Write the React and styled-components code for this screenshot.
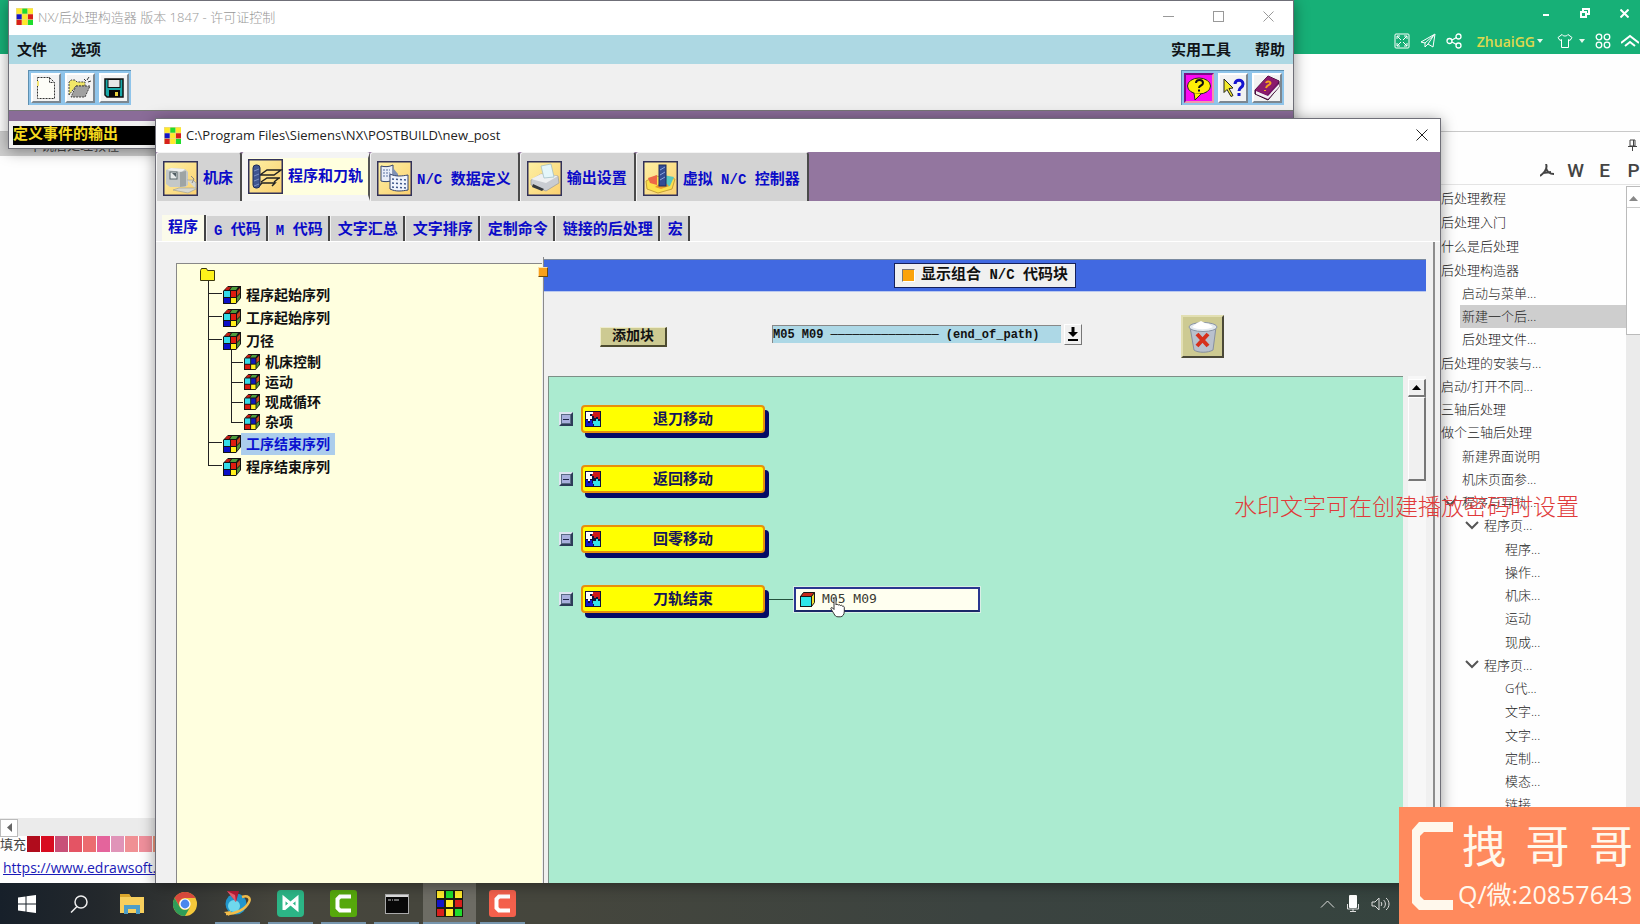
import React from 'react';
import styled, { createGlobalStyle, css } from 'styled-components';

const UI = '"Open Sans", "Noto Sans CJK SC", sans-serif';
const BITMAP = '"Liberation Mono", "Noto Sans CJK SC", monospace';

const GlobalStyle = createGlobalStyle`
  *, *::before, *::after { box-sizing: border-box; }
  html, body { margin: 0; height: 100%; overflow: hidden; }
  body { font-family: ${UI}; font-size: 13px; color: #444; background: #fff; }
  #root { height: 100%; }
  button, input, select { font: inherit; color: inherit; margin: 0; border-radius: 0; }
  button { padding: 0; border: 0; background: none; display: inline-flex; align-items: center; justify-content: center; }
  ul { list-style: none; margin: 0; padding: 0; }
  svg { display: block; flex: none; }
`;

const Desktop = styled.div`
  position: relative;
  height: 100vh;
  display: flex;
  flex-direction: column;
  overflow: hidden;
`;

/* ---------- drawing app behind ---------- */

const DrawApp = styled.div`
  flex: 1;
  min-height: 0;
  display: flex;
  flex-direction: column;
  background: #fefefe;
`;

const DrawHeader = styled.header`
  height: 54px;
  flex: none;
  background: #17b077;
  color: #fff;
  display: flex;
  flex-direction: column;
  align-items: flex-end;
`;

const WindowControls = styled.div`
  height: 26px;
  display: flex;
  align-items: center;
  gap: 30px;
  padding-right: 11px;
`;

const HeaderTools = styled.div`
  height: 28px;
  display: flex;
  align-items: center;
  gap: 10px;
  padding: 2px 1px 0 0;
`;

const ToolLink = styled.button`
  gap: 6px;
`;

const Account = styled.button`
  color: #dfd84e;
  font-weight: 600;
  font-size: 14px;
  gap: 2px;
  margin: 0 4px 0 5px;
`;

const Ribbon = styled.div`
  height: 78px;
  flex: none;
  border-bottom: 1px solid #c9c9c9;
`;

const DrawBody = styled.div`
  flex: 1;
  min-height: 0;
  display: flex;
  justify-content: space-between;
`;

const DrawLeft = styled.div`
  width: 170px;
  display: flex;
  flex-direction: column;
`;

const DocTab = styled.div`
  height: 24px;
  background: #cfcfcf;
  padding: 4px 0 0 28px;
  line-height: 18px;
  white-space: nowrap;
`;

const DrawCanvas = styled.div`
  flex: 1;
`;

const HScroll = styled.div`
  height: 18px;
  background: #ebebeb;
`;

const HScrollButton = styled.button`
  width: 18px;
  height: 18px;
  border: 1px solid #bbb;
  background: #fff;
`;

const Swatches = styled.div`
  height: 16px;
  display: flex;
  gap: 1px;
  overflow: hidden;
  white-space: nowrap;
  line-height: 16px;
`;

const Swatch = styled.span`
  width: 13px;
  flex: none;
  background: ${(p) => p.$color};
`;

const LinkBar = styled.div`
  height: 31px;
  padding-left: 3px;
  line-height: 31px;
  font-size: 14px;
  white-space: nowrap;
  overflow: hidden;
  a { color: #1a1ab8; }
`;

const Sidebar = styled.aside`
  width: 201px;
  display: flex;
  flex-direction: column;
  color: #444;
`;

const PinRow = styled.div`
  height: 25px;
  display: flex;
  align-items: center;
  justify-content: flex-end;
  padding-right: 3px;
`;

const ExportRow = styled.div`
  height: 28px;
  border-bottom: 1px solid #e4e4e4;
  display: grid;
  grid-template-columns: repeat(4, 29px);
  justify-content: end;
  margin-right: -8px;
  font: 500 19px/26px Roboto, sans-serif;
`;

const OutlineArea = styled.div`
  flex: 1;
  min-height: 0;
  display: flex;
  padding-top: 1px;
`;

const Outline = styled.div`
  flex: 1;
  display: flex;
  flex-direction: column;
  padding-bottom: 67px;
`;

const OutlineHead = styled.ul`
  display: grid;
  grid-auto-rows: 24px;
`;

const OutlineList = styled.ul`
  flex: 1;
  display: grid;
  grid-auto-rows: 1fr;
`;

const OutlineItem = styled.li`
  display: flex;
  align-items: center;
  gap: 5px;
  white-space: nowrap;
  line-height: 20px;
  font-weight: 300;
  color: #222;
  margin-left: ${(p) => [0, 21, 64, 2, 24][p.$level]}px;
  padding-left: 2px;
  background: ${(p) => (p.$active ? '#cecece' : 'transparent')};
`;

const VScroll = styled.div`
  width: 14px;
  background: #ebebeb;
`;

const VScrollThumb = styled.div`
  height: 149px;
  background: #fff;
  border: 1px solid #bbb;
  border-right: 0;
`;

const VScrollButton = styled.button`
  width: 100%;
  height: 17px;
  border-bottom: 1px solid #ccc;
`;

/* ---------- post builder windows ---------- */

const WindowFrame = styled.section`
  position: absolute;
  display: flex;
  flex-direction: column;
  background: #f0f0f0;
  border: 1px solid #6f6f78;
  box-shadow: 0 2px 14px rgba(0, 0, 0, 0.4);
`;

const LauncherWindow = styled(WindowFrame)`
  top: 0;
  left: 8px;
  right: 346px;
`;

const EditorWindow = styled(WindowFrame)`
  top: 118px;
  left: 155px;
  right: 199px;
  bottom: 41px;
  border-bottom: 0;
`;

const TitleBar = styled.header`
  height: ${(p) => (p.$muted ? 34 : 33)}px;
  flex: none;
  background: #fff;
  display: flex;
  align-items: center;
  gap: 5px;
  padding: ${(p) => (p.$muted ? '0 19px 3px 7px' : '0 12px 1px 8px')};
  color: ${(p) => (p.$muted ? '#999' : '#222')};
  font-weight: ${(p) => (p.$muted ? 300 : 400)};
`;

const TitleText = styled.h1`
  flex: 1;
  margin: 0;
  font: inherit;
  white-space: nowrap;
`;

const TitleButtons = styled.div`
  display: flex;
  align-items: center;
  gap: 39px;
`;

const MenuBar = styled.nav`
  height: 29px;
  flex: none;
  background: #add8e3;
  display: flex;
  align-items: center;
  gap: 24px;
  padding: 4px 8px 0;
  font: bold 15px/20px ${BITMAP};
  color: #101418;
`;

const MenuItem = styled.button`
  margin-left: ${(p) => (p.$push ? 'auto' : 0)};
`;

const ToolBar = styled.div`
  height: 46px;
  flex: none;
  display: flex;
  align-items: center;
  justify-content: space-between;
  padding: 0 9px 0 19px;
`;

const ToolGroup = styled.div`
  display: flex;
  gap: 4px;
  padding: 2px;
  background: #8fc4ea;
  border-top: 1px solid #5d8fb0;
  border-left: 1px solid #5d8fb0;
`;

const ToolButton = styled.button`
  width: 30px;
  height: 30px;
  background: ${(p) => (p.$pressed ? '#fb0af4' : '#f2f2f2')};
  border: 2px solid;
  border-color: ${(p) => (p.$pressed ? '#7a0c86 #ee99aa #ee99aa #7a0c86' : '#fff #7c8790 #7c8790 #fff')};
`;

const PurpleStrip = styled.div`
  height: 11px;
  background: #8a6c98;
  border-top: 1px solid #777;
`;

const StatusBar = styled.div`
  padding: 5px 4px 3px;
`;

const StatusText = styled.output`
  display: block;
  background: #000;
  color: #f5da1e;
  font: bold 15px/18px ${BITMAP};
  padding-top: 1px;
`;

const Latin = styled.span`
  font-size: 14px;
`;

const MainTabs = styled.div`
  height: 49px;
  flex: none;
  display: flex;
  background: #93769f;
`;

const MainTab = styled.button`
  height: 49px;
  gap: 5px;
  padding: 3px 7px 0 6px;
  background: #d3d3d3;
  border-right: 2px solid #4a4a4a;
  border-top: 1px solid #f4f4f4;
  border-left: 1px solid #f4f4f4;
  border-radius: 3px 3px 0 0;
  font: bold 15px/20px ${BITMAP};
  color: #0b0bc8;
  white-space: pre;
  > span { padding-top: 3px; }
  ${(p) => p.$active && css`
    background: #ffffdf;
    border: 6px solid #f4f4f4;
    border-right: 2px solid #555;
    padding: 0 5px 0 0;
  `}
`;

const SubTabs = styled.div`
  height: 41px;
  flex: none;
  display: flex;
  align-items: flex-end;
  gap: 1px;
  padding-left: 6px;
  border-bottom: 1px solid #fff;
`;

const SubTab = styled.button`
  height: 25px;
  padding: 4px 5px 0 7px;
  background: #d3d3d3;
  border-right: 2px solid #444;
  font: bold 15px/20px ${BITMAP};
  color: #0b0bc8;
  white-space: pre;
  ${(p) => p.$active && css`
    height: 26px;
    background: #fbfbea;
    padding: 2px 6px 0;
  `}
`;

const Workspace = styled.div`
  flex: 1;
  min-height: 0;
  display: flex;
  margin-right: 5px;
  border-right: 2px solid #8c8c8c;
  padding: 17px 7px 0 20px;
`;

const TreePane = styled.div`
  flex: none;
  width: 366px;
  margin-top: 4px;
  background: #ffffdf;
  border-top: 1px solid #888;
  border-left: 1px solid #888;
  padding: 4px 0 0 23px;
  font: bold 14px/20px ${BITMAP};
  color: #111;
`;

const Tree = styled.ul`
  margin-left: 8px;
  padding-top: 2px;
`;

const TreeNode = styled.li`
  position: relative;
  padding-left: ${(p) => (p.$sub ? 13 : 15)}px;
  &::before {
    content: '';
    position: absolute;
    top: -2px;
    left: 0;
    width: ${(p) => (p.$sub ? 12 : 14)}px;
    height: 13px;
    border-left: 1px solid #222;
    border-bottom: 1px solid #222;
  }
  &:not(:last-child)::after {
    content: '';
    position: absolute;
    top: 0;
    bottom: 0;
    left: 0;
    border-left: 1px solid #222;
  }
  ul { margin-left: 8px; }
`;

const TreeRow = styled.div`
  display: flex;
  align-items: center;
  height: ${(p) => (p.$sub ? 20 : 23)}px;
`;

const TreeLabel = styled.span`
  height: 22px;
  line-height: 20px;
  padding: 2px 5px 0 5px;
  background: ${(p) => (p.$selected ? '#abcdec' : 'transparent')};
  color: ${(p) => (p.$selected ? '#0a12d0' : 'inherit')};
`;

const Splitter = styled.div`
  position: relative;
  width: 2px;
  margin-top: -2px;
  border-right: 1px solid #8a8a8a;
`;

const SplitHandle = styled.button`
  position: absolute;
  top: 10px;
  left: -4px;
  width: 10px;
  height: 10px;
  background: #f9a11b;
  border: 1px solid #fff;
  border-color: #fde0a8 #6b4a10 #6b4a10 #fde0a8;
`;

const Editor = styled.div`
  flex: 1;
  min-width: 0;
  display: flex;
  flex-direction: column;
`;

const OptionBar = styled.div`
  height: 33px;
  flex: none;
  background: #4169e1;
  border-top: 1px solid #7a8aa0;
  border-bottom: 1px solid #b9c8f0;
  display: flex;
  align-items: center;
  justify-content: center;
`;

const CheckLabel = styled.label`
  display: flex;
  align-items: center;
  gap: 6px;
  height: 25px;
  padding: 0 7px;
  border: 1px solid #15205a;
  background: #f0f0f0;
  font: bold 15px/20px ${BITMAP};
  color: #111;
  white-space: pre;
`;

const CheckBox = styled.input`
  appearance: none;
  width: 13px;
  height: 13px;
  background: #fba30a;
  border: 1px solid;
  border-color: #777 #fff #fff #777;
`;

const ActionRow = styled.div`
  height: 84px;
  flex: none;
  display: grid;
  grid-template-columns: 56fr 67px 105fr 310px 99fr 43px 202fr;
  align-items: center;
  padding-top: 5px;
`;

const AddButton = styled.button`
  grid-column: 2;
  height: 20px;
  background: #cdca92;
  border: 1px solid;
  border-width: 1px 2px 2px 1px;
  border-color: #eeeccb #4d4b30 #4d4b30 #eeeccb;
  font: bold 14px/16px ${BITMAP};
  color: #111;
`;

const BlockPicker = styled.div`
  grid-column: 4;
  display: flex;
  align-items: center;
  gap: 3px;
  margin-top: -5px;
`;

const BlockSelect = styled.select`
  appearance: none;
  flex: 1;
  height: 18px;
  padding: 0;
  border: 0;
  border-top: 1px solid #888;
  border-left: 1px solid #888;
  background: #add8e6;
  font: bold 12px/16px ${BITMAP};
  color: #111;
`;

const PickerButton = styled.button`
  width: 18px;
  height: 21px;
  border: 1px solid;
  border-color: #fff #777 #777 #fff;
`;

const TrashButton = styled.button`
  grid-column: 6;
  width: 43px;
  height: 43px;
  background: #cdca92;
  border: 2px solid;
  border-color: #e2dfb2 #4a4838 #4a4838 #e2dfb2;
`;

const CanvasRow = styled.div`
  flex: 1;
  min-height: 0;
  display: flex;
  gap: 5px;
  padding-left: 4px;
`;

const BlockCanvas = styled.div`
  flex: 1;
  background: #abebd0;
  border-top: 1px solid #7d8f86;
  border-left: 1px solid #7d8f86;
  padding: 28px 0 0 10px;
  display: flex;
  flex-direction: column;
  gap: 32px;
`;

const BlockRow = styled.div`
  display: flex;
  align-items: center;
  height: 28px;
`;

const Toggle = styled.button`
  width: 14px;
  height: 14px;
  background: #a9b0dd;
  border: 2px solid;
  border-color: #dfe5f2 #2d3c58 #2d3c58 #dfe5f2;
  outline: 1px solid #5a6a84;
  outline-offset: -3px;
  color: #20264a;
`;

const EventBlock = styled.button`
  width: 184px;
  height: 28px;
  margin: 0 4px 0 8px;
  padding: 0 2px;
  background: #ff0;
  border: 2px solid #e8900c;
  border-radius: 4px;
  box-shadow: 4px 5px 0 #060a66;
  font: bold 15px/20px ${BITMAP};
  color: #15155c;
  span { flex: 1; padding: 3px 0 0 4px; }
`;

const Connector = styled.span`
  width: 25px;
  height: 1px;
  background: #23503c;
`;

const CodeNode = styled.button`
  position: relative;
  width: 186px;
  height: 25px;
  justify-content: flex-start;
  gap: 7px;
  padding-left: 4px;
  background: #fffff0;
  border: 2px solid #2a3790;
  border-bottom-color: #1b2868;
  outline: 1px solid #d9efe6;
  font: 13px/18px "DejaVu Sans Mono", monospace;
  color: #3a3a32;
`;

const Pointer = styled.span`
  position: absolute;
  left: 34px;
  top: 8px;
`;

const CanvasScroll = styled.div`
  width: 18px;
  background: #f7f7f7;
`;

const CanvasScrollPart = styled.button`
  width: 18px;
  height: ${(p) => p.$size}px;
  background: #f0f0f0;
  border: 1px solid;
  border-width: 1px 2px 2px 1px;
  border-color: #fff #777 #777 #fff;
`;

/* ---------- taskbar and overlays ---------- */

const Taskbar = styled.footer`
  height: 41px;
  flex: none;
  display: flex;
  justify-content: space-between;
  background: linear-gradient(90deg, #17202a 0, #23282c 100px, #47463d 280px, #45463d 560px, #3b4340 60%, #33443e 100%);
`;

const TaskList = styled.div`
  display: flex;
`;

const TaskButton = styled.button`
  width: 45px;
  height: 41px;
  margin: 0 4px;
  border-bottom: 2px solid ${(p) => (p.$open ? '#7796ae' : 'transparent')};
  padding-top: 2px;
  &:first-child { margin-right: 3px; }
  ${(p) => p.$active && css`
    width: 53px;
    margin: 0;
    background: #6d6c64;
  `}
`;

const Tray = styled.div`
  display: flex;
  align-items: center;
  gap: 12px;
  margin-right: 250px;
`;

const Badge = styled.div`
  position: absolute;
  right: 0;
  bottom: 0;
  width: 241px;
  height: 117px;
  background: #ff8a5d;
  color: #fff8ec;
  display: flex;
  align-items: center;
  gap: 5px;
  padding: 0 6px 0 13px;
`;

const BadgeText = styled.div`
  flex: 1;
  display: flex;
  flex-direction: column;
`;

const BadgeName = styled.div`
  display: flex;
  justify-content: space-between;
  padding: 0 1px 0 4px;
  font-size: 44px;
  line-height: 56px;
`;

const BadgeContact = styled.div`
  font-size: 25px;
  line-height: 40px;
  white-space: nowrap;
`;

const Watermark = styled.div`
  position: absolute;
  top: 489px;
  right: 61px;
  font: 300 23px/32px "Noto Sans CJK SC", sans-serif;
  color: #e03a3a;
  white-space: nowrap;
  pointer-events: none;
`;

/* ---------- icons ---------- */

const Line = ({ w = 16, h = w, box, sw = 1, children, color = 'currentColor' }) => (
  <svg width={w} height={h} viewBox={box || `0 0 ${w} ${h}`} fill="none" stroke={color} strokeWidth={sw}>{children}</svg>
);

const MosaicIcon = ({ size = 17, dark }) => {
  const c = ['#ffe92a', '#1fdc2c', '#ffe92a', '#1414c8', '#ffe92a', '#d8201c', '#d8201c', '#ffe92a', '#1fdc2c'];
  return (
    <svg width={size} height={size} viewBox="0 0 27 27">
      <rect width="27" height="27" fill={dark ? '#1c1c10' : '#e8d890'} />
      {c.map((f, i) => <rect key={i} x={1 + (i % 3) * 9} y={1 + Math.floor(i / 3) * 9} width={dark ? 7 : 8} height={dark ? 7 : 8} fill={f} />)}
    </svg>
  );
};

const Cross = ({ size = 11, sw = 1 }) => <Line w={size} sw={sw}><path d={`M.5.5l${size - 1} ${size - 1}M${size - 0.5}.5L.5 ${size - 0.5}`} /></Line>;

const Caret = () => <svg width="6" height="4"><path d="M0 0h6L3 4z" fill="#e8f8ee" /></svg>;

const CubeIcon = ({ size = 18, sub }) => (
  <svg width={size} height={size} viewBox="0 0 18 18">
    <path d="M0 5l5-5h13v12l-5 6H0z" fill="#141414" />
    <path d="M2 4l2-3h4L6 4z" fill="#c01c14" /><path d="M7 4l2-3h6l-2 3z" fill="#4d9c3c" />
    <path d="M14 5l3-3v5l-3 3z" fill="#c8431e" /><path d="M14 11l3-3v4l-3 4z" fill="#4f8f38" />
    <rect x="1" y="5" width="6" height="6" fill="#35dbe8" /><rect x="8" y="5" width="5" height="6" fill={sub ? '#1018b8' : '#e01c10'} />
    <rect x="1" y="12" width="6" height="5" fill={sub ? '#d81c10' : '#0c10c8'} /><rect x="8" y="12" width="5" height="5" fill="#fff01c" />
  </svg>
);

const FolderIcon = () => (
  <svg width="15" height="13" viewBox="0 0 15 13"><path d="M.5 12.500v-10l1-2h5l1 2h7v10z" fill="#fdf21b" stroke="#3b3810" /></svg>
);

const EventIcon = () => (
  <svg width="16" height="16" viewBox="0 0 16 16">
    <rect width="16" height="16" fill="#101038" />
    <path d="M1 1h7v2H5v2h2v3H5v2H3V8H1z" fill="#fff" /><path d="M8 1h7v7h-2V6h-2v1H9V5H7V3h1z" fill="#d01818" />
    <path d="M1 9h2v3h2V9h2v3h1v3H1z" fill="#1018d0" /><path d="M8 10h3V8h2v2h2v5H9v-2H8z" fill="#36e2ea" />
  </svg>
);

const NodeIcon = () => (
  <svg width="15" height="15" viewBox="0 0 15 15" stroke="#181818">
    <path d="M.5 4.500l3-4h11l-3 4z" fill="#c8281c" /><path d="M11.500 4.500l3-4v10l-3 4z" fill="#f0e030" /><rect x=".5" y="4.500" width="11" height="10" fill="#2fe6ea" />
  </svg>
);

const HandIcon = () => (
  <svg width="16" height="21" viewBox="0 0 16 21">
    <path d="M4 1.500c0-1 2-1 2 0V8c.3-1 2-.8 2.200.2.500-.9 2-.6 2.200.4.600-.8 2-.3 2.100.7.700-.4 1.800.1 1.800 1v4c0 3-1.500 5.500-4 5.500H8c-2 0-3-1-4-3L1 12c-.6-1.300.8-2 1.700-1L4 12.500z" fill="#fff" stroke="#222" strokeWidth=".9" />
  </svg>
);

const NewIcon = () => (
  <svg width="20" height="24" viewBox="0 0 20 24"><path d="M1.500 1.500h12l5 5v16h-17zM13.500 1.500v5h5" fill="#fdfdf8" stroke="#333" strokeDasharray="2 1" /><path d="M1 5h2v5H1z" fill="#f4e678" /></svg>
);
const OpenIcon = () => (
  <svg width="26" height="24" viewBox="0 0 26 24"><path d="M2 19V6l2-2h4l2 2h8v4H9z" fill="#f1e768" stroke="#444" strokeDasharray="2 1" /><path d="M9 10h14l-5 11H4z" fill="#a0a0a0" stroke="#444" strokeDasharray="2 1" /><path d="M17 3l2 2M22 1l-2 3M21 6l3-1" stroke="#333" /></svg>
);
const SaveIcon = () => (
  <svg width="20" height="20" viewBox="0 0 20 20"><path d="M1 1h18v18H3l-2-2z" fill="#18a8a8" stroke="#111" strokeWidth="1.500" /><rect x="4" y="1.500" width="12" height="8" fill="#e6e6e6" stroke="#111" /><rect x="5" y="12" width="11" height="7" fill="#080808" /><rect x="11" y="14" width="3" height="4" fill="#e8d23c" /></svg>
);
const BubbleIcon = () => (
  <svg width="26" height="26" viewBox="0 0 26 26"><ellipse cx="13" cy="11" rx="11.500" ry="8" fill="#ffee08" stroke="#222" /><path d="M8 18l1 7 6-6" fill="#ffee08" stroke="#222" /><path d="M10 8c0-4 7-4 7 0 0 3-4 2-4 5M13 14.500v2" stroke="#111" strokeWidth="2" fill="none" /></svg>
);
const ArrowHelpIcon = () => (
  <svg width="26" height="26" viewBox="0 0 26 26"><path d="M4 4l9 9-4 .5 4 7-2 1-4-7-3 3z" fill="#f3ea2a" stroke="#222" /><path d="M15 9c0-5 8-5 8 0 0 4-4 3-4 7M19 18v3" stroke="#1414d0" strokeWidth="3" fill="none" /></svg>
);
const BookIcon = () => (
  <svg width="28" height="28" viewBox="0 0 28 28"><path d="M2 16L15 2l11 5v6L15 26 2 20z" fill="#701464" stroke="#300828" /><path d="M3 17l12 5 11-12v3L15 25 3 20z" fill="#f4f0f4" /><path d="M2 16L15 2l11 5-12 14z" fill="#8c1a6c" /><path d="M13 9c1-3 6-1 4 1s-3 1-4 4M12 16v1" stroke="#f6a21c" strokeWidth="2" fill="none" /></svg>
);

const TabFrame = ({ children }) => (
  <svg width="35" height="35" viewBox="0 0 35 35"><defs><linearGradient id="tabBg" x1="0" x2="1" y1="0" y2="1"><stop stopColor="#fdf0a4" /><stop offset="1" stopColor="#fbd070" /></linearGradient></defs><rect x=".75" y=".75" width="33.500" height="33.500" fill="url(#tabBg)" stroke="#32325a" strokeWidth="1.500" />{children}</svg>
);
const MachineIcon = () => (
  <TabFrame><path d="M3 9l5-2 14 1 3 3v13l-3 2H7l-4-3z" fill="#c4c8c8" /><path d="M4 9l4-2 14 1-3 3z" fill="#eef0f0" /><path d="M17 11l6-1v15l-6 1z" fill="#9ea4a4" /><rect x="7" y="11" width="7" height="7" fill="#e8ecec" stroke="#59666a" /><path d="M9 12h4v4z" fill="#515e64" /><path d="M24 19h6l3 3v5H16l-6 2 15 3 8-4" fill="#d8d8d0" stroke="#a5a595" strokeWidth=".7" /><path d="M28 15l3 3-2 4" stroke="#888" fill="none" /></TabFrame>
);
const ToolpathIcon = () => (
  <TabFrame><path d="M12 16l7-5h14l-7 5zM13 23l6-4h13M26 23l5-4M10 28l4-4h13l-3 3" fill="none" stroke="#222" strokeWidth="1.500" /><rect x="5" y="6" width="7" height="23" rx="3" fill="#3f5590" stroke="#1e2c58" /><path d="M6 12l5-2M6 17l5-2M6 22l5-2M6 27l5-2" stroke="#7c92c4" /></TabFrame>
);
const DataIcon = () => (
  <TabFrame><path d="M4 5c4 1 8 1 12-1v15c-4 2-8 2-12 1z" fill="#e8eef8" stroke="#34446c" /><path d="M6 9h7M6 12h7M6 15h7" stroke="#5770a0" strokeDasharray="2 1" /><path d="M16 7l5 6v12l-5-4z" fill="#7e91b4" /><path d="M13 13c6 3 12 2 18 1v15c-6 1-12 2-18-1z" fill="#f0f4fc" stroke="#34446c" /><path d="M15 18l14 1M15 22l14 1M15 26l14 1" stroke="#40588c" strokeWidth="1.500" strokeDasharray="2 2" /></TabFrame>
);
const PrinterIcon = () => (
  <TabFrame><path d="M4 19l10-6 17 2 1 7-13 8-15-6z" fill="#c9ccd2" stroke="#999" strokeWidth=".7" /><path d="M4 18l10-5 17 2-12 7z" fill="#eef0f2" /><path d="M14 5l10-2 3 13-10 1z" fill="#e4f6fa" stroke="#9bbac2" strokeWidth=".7" /><path d="M6 23l11 5-2 2-10-4z" fill="#34383e" /></TabFrame>
);
const ControllerIcon = () => (
  <TabFrame><path d="M3 20l10-5 19 3-3 10-14 4-11-4z" fill="#fbe04c" stroke="#c7a138" /><path d="M5 17l9-3v10l-7-2z" fill="#ed6847" /><path d="M20 14l11 2-4 9-9 2z" fill="#58c7bd" /><path d="M12 26l8-6 6 5-8 3z" fill="#ed9a29" /><rect x="16" y="4" width="7" height="21" fill="#334c94" stroke="#1d2d63" /><path d="M17 9l5-3M17 14l5-3M17 19l5-3" stroke="#8da5dc" /></TabFrame>
);

const TrashIcon = () => (
  <svg width="34" height="36" viewBox="0 0 34 36"><path d="M4 8l4 23c4 3 14 3 19 0l3-23z" fill="#b9c1cd" stroke="#8790a0" /><ellipse cx="17" cy="8" rx="14" ry="4.500" fill="#e2e8ee" stroke="#8994a4" /><path d="M6 8l5-4 4-2 4 2 4 1 4 3c-6 3-15 3-21 0z" fill="#fff" /><path d="M11 15l11 12M22 15L11 27" stroke="#d6301c" strokeWidth="4" /></svg>
);

const ChromeIcon = () => (
  <svg width="24" height="24" viewBox="0 0 24 24"><circle cx="12" cy="12" r="12" fill="#f4c83a" /><path d="M1.600 6A12 12 0 0122.400 6H12a6 6 0 00-5.200 9z" fill="#dd4b3e" /><path d="M1.600 6A12 12 0 0012 24l5.200-9a6 6 0 01-10.400 0z" fill="#2f9d58" /><circle cx="12" cy="12" r="5.600" fill="#fff" /><circle cx="12" cy="12" r="4.400" fill="#4a88ee" /></svg>
);
const ExplorerIcon = () => (
  <svg width="24" height="22" viewBox="0 0 24 22"><path d="M0 1h9l2 3h13v16H0z" fill="#f7cf5d" /><path d="M0 1h9l2 3H0z" fill="#dba62c" /><path d="M4 21v-9h16v9h-4v-5H8v5z" fill="#4d9ec8" /></svg>
);
const NxIcon = () => (
  <svg width="27" height="27" viewBox="0 0 27 27"><circle cx="12" cy="14" r="10.500" fill="#2296cc" /><circle cx="10" cy="16" r="6" fill="#6fd8ee" /><path d="M18 7c6-2 9 1 7 5-3 7-13 12-23 12" fill="none" stroke="#f2bd4b" strokeWidth="2.500" /><path d="M0 22l7-1-2 5z" fill="#f2bd4b" /><path d="M3 1h12l-3 11z" fill="#b81c38" /><path d="M3 1l9 11-1-7z" fill="#ea6070" /></svg>
);
const EdrawIcon = () => (
  <svg width="27" height="27" viewBox="0 0 27 27"><rect width="27" height="27" rx="4" fill="#2cb586" /><path d="M7 20V8l13 11V8L7 19" fill="none" stroke="#fff" strokeWidth="3" /></svg>
);
const CamIcon = ({ fill }) => (
  <svg width="27" height="27" viewBox="0 0 27 27"><rect width="27" height="27" rx="3" fill={fill} /><path d="M21 6.500H10L7.500 9v9L10 20.500h11" fill="none" stroke="#fff" strokeWidth="4" /></svg>
);
const CmdIcon = () => (
  <svg width="24" height="20" viewBox="0 0 24 20"><rect x=".5" y=".5" width="23" height="19" fill="#080808" stroke="#aaa" /><path d="M1 2h22" stroke="#ddd" strokeWidth="2" /><path d="M3 6h3M7 6h1M9 6h5" stroke="#ccc" /></svg>
);

const mainTabs = [
  { icon: <MachineIcon />, label: '机床' },
  { icon: <ToolpathIcon />, label: '程序和刀轨', active: true },
  { icon: <DataIcon />, latin: 'N/C ', label: '数据定义' },
  { icon: <PrinterIcon />, label: '输出设置' },
  { icon: <ControllerIcon />, before: '虚拟', latin: ' N/C ', label: '控制器' },
];
const subTabs = [
  { label: '程序', active: true }, { latin: 'G ', label: '代码' }, { latin: 'M ', label: '代码' }, { label: '文字汇总' },
  { label: '文字排序' }, { label: '定制命令' }, { label: '链接的后处理' }, { label: '宏' },
];
const tree = [
  { label: '程序起始序列' }, { label: '工序起始序列' },
  { label: '刀径', children: ['机床控制', '运动', '现成循环', '杂项'] },
  { label: '工序结束序列', selected: true }, { label: '程序结束序列' },
];
const blocks = [{ label: '退刀移动' }, { label: '返回移动' }, { label: '回零移动' }, { label: '刀轨结束', code: 'M05 M09' }];
const outlineHead = ['后处理教程', '后处理入门', '什么是后处理'];
const outline = [
  ['后处理构造器', 0], ['启动与菜单...', 1], ['新建一个后...', 1, true], ['后处理文件...', 1], ['后处理的安装与...', 0],
  ['启动/打开不同...', 0], ['三轴后处理', 0], ['做个三轴后处理', 0], ['新建界面说明', 1], ['机床页面参...', 1],
  ['程序与导轨...', 3], ['程序页...', 4], ['程序...', 2], ['操作...', 2], ['机床...', 2], ['运动', 2], ['现成...', 2],
  ['程序页...', 4], ['G代...', 2], ['文字...', 2], ['文字...', 2], ['定制...', 2], ['模态...', 2], ['链接...', 2],
];
const swatches = ['#b00c1c', '#d80c20', '#c85078', '#e45464', '#ec6c70', '#e4649c', '#e094b8', '#f09094', '#f0909c', '#f0987c'];

const Outliner = () => (
  <Sidebar>
    <PinRow><button aria-label="固定"><Line w={9} h={12}><path d="M2 1h5v6H2zM5.500 1v6M0 7.500h9M4.500 8v4" /></Line></button></PinRow>
    <ExportRow>
      <button aria-label="PDF"><Line w={14} h={13} sw={2}><path d="M6 0c2 5-2 9-6 12M6 4c1 4 4 6 8 6M3 9l8-1" /></Line></button>
      <button>W</button><button>E</button><button>P</button>
    </ExportRow>
    <OutlineArea>
      <Outline>
        <OutlineHead>{outlineHead.map((t) => <OutlineItem key={t} $level={0}>{t}</OutlineItem>)}</OutlineHead>
        <OutlineList>
          {outline.map(([t, level, active], i) => (
            <OutlineItem key={i} $level={level} $active={active}>
              {level > 2 && <Line w={14} h={9} sw={2} color="#555"><path d="M1 1l6 6 6-6" /></Line>}{t}
            </OutlineItem>
          ))}
        </OutlineList>
      </Outline>
      <VScroll><VScrollThumb><VScrollButton aria-label="向上"><svg width="9" height="5"><path d="M0 5l4.500-5L9 5z" fill="#888" /></svg></VScrollButton></VScrollThumb></VScroll>
    </OutlineArea>
  </Sidebar>
);

const Drawing = () => (
  <DrawApp>
    <DrawHeader>
      <WindowControls>
        <button aria-label="最小化"><Line w={8} h={8} sw={2}><path d="M1 6h6" /></Line></button>
        <button aria-label="还原"><Line w={10} h={10} sw={2}><path d="M3 3V1h6v5H7M1 4h5v5H1z" /></Line></button>
        <button aria-label="关闭"><Cross size={9} sw={2} /></button>
      </WindowControls>
      <HeaderTools>
        <button aria-label="全屏"><Line w={16}><rect x="1" y="1" width="14" height="14" rx="1" /><path d="M3 6V3h3M3 3l4 4M10 3h3v3M13 3L9 7M3 10v3h3M3 13l4-4M13 10v3h-3M13 13L9 9" /></Line></button>
        <button aria-label="发送"><Line w={16}><path d="M1 9L15 1l-2 13-5-3-3 3V10zM5 10l9-8-6 9" /></Line></button>
        <button aria-label="分享"><Line w={16} sw={1.3}><circle cx="3.500" cy="8" r="2.500" /><circle cx="12.500" cy="3.500" r="2.500" /><circle cx="12.500" cy="12.500" r="2.500" /><path d="M6 7l4.500-2.500M6 9l4.500 2.500" /></Line></button>
        <Account>ZhuaiGG <Caret /></Account>
        <ToolLink aria-label="主题"><Line w={16}><path d="M5 1.500c1 2 5 2 6 0l4 3-2 3-1.500-1v8h-7v-8L3 7.500l-2-3z" /></Line><Caret /></ToolLink>
        <button aria-label="应用"><Line w={16} sw={1.3}><circle cx="4" cy="4" r="2.800" /><circle cx="12" cy="4" r="2.800" /><circle cx="4" cy="12" r="2.800" /><circle cx="12" cy="12" r="2.800" /></Line></button>
        <button aria-label="收起"><Line w={18} h={14} sw={2}><path d="M0 9l9-7 9 7M4 12l5-4 5 4" /></Line></button>
      </HeaderTools>
    </DrawHeader>
    <Ribbon />
    <DrawBody>
      <DrawLeft>
        <DocTab>车铣后处理教程</DocTab>
        <DrawCanvas />
        <HScroll><HScrollButton aria-label="向左"><svg width="5" height="9"><path d="M5 0v9L0 4.500z" fill="#666" /></svg></HScrollButton></HScroll>
        <Swatches>填充{swatches.map((c) => <Swatch key={c} $color={c} />)}</Swatches>
        <LinkBar><a href="https://www.edrawsoft.cn">https://www.edrawsoft.cn</a></LinkBar>
      </DrawLeft>
      <Outliner />
    </DrawBody>
  </DrawApp>
);

const Launcher = () => (
  <LauncherWindow>
    <TitleBar $muted>
      <MosaicIcon />
      <TitleText>NX/后处理构造器 版本 1847 - 许可证控制</TitleText>
      <TitleButtons>
        <button aria-label="最小化"><Line w={11}><path d="M0 5.500h11" /></Line></button>
        <button aria-label="最大化"><Line w={11}><rect x=".5" y=".5" width="10" height="10" /></Line></button>
        <button aria-label="关闭"><Cross /></button>
      </TitleButtons>
    </TitleBar>
    <MenuBar>
      <MenuItem>文件</MenuItem><MenuItem>选项</MenuItem><MenuItem $push>实用工具</MenuItem><MenuItem>帮助</MenuItem>
    </MenuBar>
    <ToolBar>
      <ToolGroup>
        <ToolButton aria-label="新建"><NewIcon /></ToolButton>
        <ToolButton aria-label="打开"><OpenIcon /></ToolButton>
        <ToolButton aria-label="保存"><SaveIcon /></ToolButton>
      </ToolGroup>
      <ToolGroup>
        <ToolButton $pressed aria-label="气泡提示"><BubbleIcon /></ToolButton>
        <ToolButton aria-label="上下文帮助"><ArrowHelpIcon /></ToolButton>
        <ToolButton aria-label="手册"><BookIcon /></ToolButton>
      </ToolGroup>
    </ToolBar>
    <PurpleStrip />
    <StatusBar><StatusText>定义事件的输出</StatusText></StatusBar>
  </LauncherWindow>
);

const PostEditor = () => (
  <EditorWindow>
    <TitleBar>
      <MosaicIcon />
      <TitleText>C:\Program Files\Siemens\NX\POSTBUILD\new_post</TitleText>
      <button aria-label="关闭"><Cross size={12} /></button>
    </TitleBar>
    <MainTabs>
      {mainTabs.map((t) => (
        <MainTab key={t.label} $active={t.active}>{t.icon}<span>{t.before}{t.latin && <Latin>{t.latin}</Latin>}{t.label}</span></MainTab>
      ))}
    </MainTabs>
    <SubTabs>
      {subTabs.map((t, i) => (
        <SubTab key={i} $active={t.active}>{t.latin && <Latin>{t.latin}</Latin>}{t.label}</SubTab>
      ))}
    </SubTabs>
    <Workspace>
      <TreePane>
        <FolderIcon />
        <Tree>
          {tree.map((n) => (
            <TreeNode key={n.label}>
              <TreeRow><CubeIcon /><TreeLabel $selected={n.selected}>{n.label}</TreeLabel></TreeRow>
              {n.children && (
                <ul>{n.children.map((c) => <TreeNode key={c} $sub><TreeRow $sub><CubeIcon size={16} sub /><TreeLabel>{c}</TreeLabel></TreeRow></TreeNode>)}</ul>
              )}
            </TreeNode>
          ))}
        </Tree>
      </TreePane>
      <Splitter><SplitHandle aria-label="调整宽度" /></Splitter>
      <Editor>
        <OptionBar>
          <CheckLabel><CheckBox type="checkbox" defaultChecked /><span>显示组合<Latin> N/C </Latin>代码块</span></CheckLabel>
        </OptionBar>
        <ActionRow>
          <AddButton>添加块</AddButton>
          <BlockPicker>
            <BlockSelect aria-label="代码块"><option>M05 M09 ─────────────── (end_of_path)</option></BlockSelect>
            <PickerButton aria-label="展开"><svg width="12" height="14"><path d="M6 0v7" stroke="#000" strokeWidth="3" /><path d="M1 5h10L6 10zM1 12h10v2H1z" /></svg></PickerButton>
          </BlockPicker>
          <TrashButton aria-label="删除"><TrashIcon /></TrashButton>
        </ActionRow>
        <CanvasRow>
          <BlockCanvas>
            {blocks.map((b) => (
              <BlockRow key={b.label}>
                <Toggle aria-label="折叠"><Line w={6} h={1}><path d="M0 .5h6" /></Line></Toggle>
                <EventBlock><EventIcon /><span>{b.label}</span></EventBlock>
                {b.code && <><Connector /><CodeNode><NodeIcon />{b.code}<Pointer><HandIcon /></Pointer></CodeNode></>}
              </BlockRow>
            ))}
          </BlockCanvas>
          <CanvasScroll>
            <CanvasScrollPart $size={18} aria-label="向上"><svg width="9" height="5"><path d="M0 5l4.500-5L9 5z" /></svg></CanvasScrollPart>
            <CanvasScrollPart $size={84} aria-label="滚动块" />
          </CanvasScroll>
        </CanvasRow>
      </Editor>
    </Workspace>
  </EditorWindow>
);

export default function App() {
  return (
    <Desktop>
      <GlobalStyle />
      <Drawing />
      <Taskbar>
        <TaskList>
          <TaskButton aria-label="开始"><svg width="18" height="18" viewBox="0 0 18 18" fill="#fff"><path d="M0 2.500l7.500-1v7H0zM8.500 1.300L18 0v8.500H8.500zM0 9.500h7.500v7l-7.500-1zM8.500 9.500H18V18l-9.500-1.300z" /></svg></TaskButton>
          <TaskButton aria-label="搜索"><Line w={18} sw={1.5} color="#eee"><circle cx="11" cy="7" r="6" /><path d="M7 11.500L1 17.500" /></Line></TaskButton>
          <TaskButton aria-label="文件资源管理器"><ExplorerIcon /></TaskButton>
          <TaskButton aria-label="Chrome"><ChromeIcon /></TaskButton>
          <TaskButton $open aria-label="NX"><NxIcon /></TaskButton>
          <TaskButton $open aria-label="MindMaster"><EdrawIcon /></TaskButton>
          <TaskButton $open aria-label="Camtasia"><CamIcon fill="#56a80c" /></TaskButton>
          <TaskButton $open aria-label="命令提示符"><CmdIcon /></TaskButton>
          <TaskButton $open $active aria-label="后处理构造器"><MosaicIcon size={27} dark /></TaskButton>
          <TaskButton $open aria-label="录制"><CamIcon fill="#f4604c" /></TaskButton>
        </TaskList>
        <Tray>
          <Line w={15} h={8} color="#ddd"><path d="M1 7.500l6.500-6.500 6.500 6.500" /></Line>
          <svg width="12" height="17"><rect x="2" width="8" height="13" rx="1" fill="#fff" /><path d="M.5 9v5h11V9M6 14v3M3 16.500h6" stroke="#ddd" fill="none" /></svg>
          <Line w={19} h={14} color="#ddd"><path d="M1 5h3l4-4v12L4 9H1zM10 5c1 1 1 3 0 4M12.500 3c2.500 2 2.500 6 0 8M15 1c4 3 4 9 0 12" /></Line>
        </Tray>
      </Taskbar>
      <Launcher />
      <PostEditor />
      <Watermark>水印文字可在创建播放密码时设置</Watermark>
      <Badge>
        <svg width="41" height="88" viewBox="0 0 41 88"><path d="M41 0H7L0 8v73l7 7h34V78H12l-4-4V14l4-4h29z" fill="#fff8ec" /></svg>
        <BadgeText>
          <BadgeName><span>拽</span><span>哥</span><span>哥</span></BadgeName>
          <BadgeContact>Q/微:20857643</BadgeContact>
        </BadgeText>
      </Badge>
    </Desktop>
  );
}
